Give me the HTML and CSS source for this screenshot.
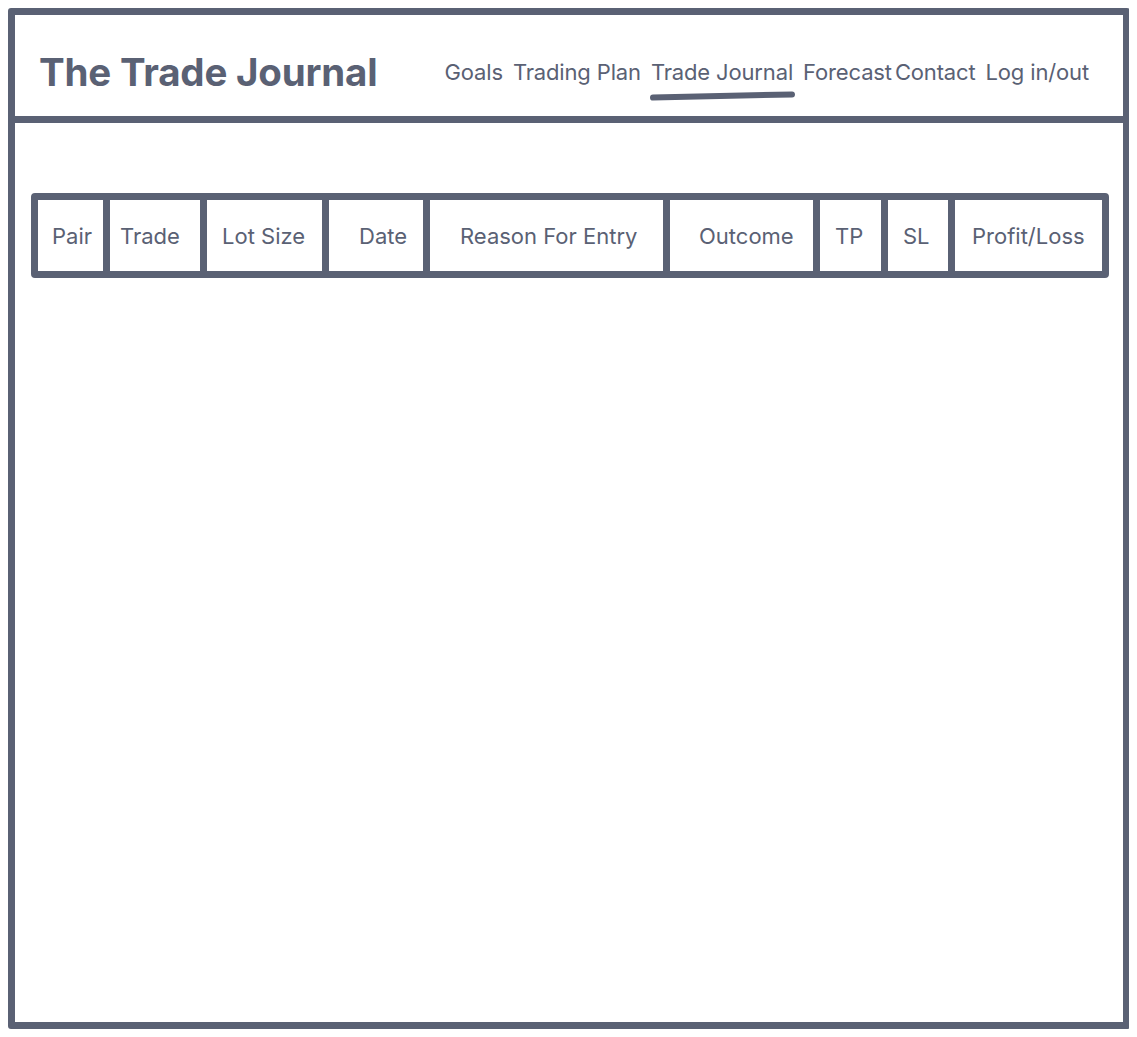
FILE: index.html
```html
<!DOCTYPE html>
<html lang="en">
<head>
<meta charset="utf-8">
<title>The Trade Journal</title>
<link rel="stylesheet" href="styles.css">
</head>
<body>
<div class="frame">
  <header class="header">
    <h1 class="title">The Trade Journal</h1>
    <nav class="nav">
      <a class="nav-link">Goals</a>
      <a class="nav-link">Trading Plan</a>
      <a class="nav-link active">Trade Journal</a>
      <a class="nav-link tight">Forecast</a>
      <a class="nav-link">Contact</a>
      <a class="nav-link">Log in/out</a>
    </nav>
  </header>
  <main class="content">
    <div class="table">
      <div class="cell c-pair">Pair</div>
      <div class="cell c-trade">Trade</div>
      <div class="cell c-lot">Lot Size</div>
      <div class="cell c-date">Date</div>
      <div class="cell c-reason">Reason For Entry</div>
      <div class="cell c-outcome">Outcome</div>
      <div class="cell c-tp">TP</div>
      <div class="cell c-sl">SL</div>
      <div class="cell c-pl">Profit/Loss</div>
    </div>
  </main>
</div>
</body>
</html>
```
FILE: styles.css
```css
* { box-sizing: border-box; }
html, body { background: #ffffff; }
body {
  margin: 8px;
  font-family: Inter, "Noto Sans", sans-serif;
  color: #5a6174;
}
.frame {
  width: 1122px;
  height: 1021px;
  border: 7px solid #5a6174;
  border-radius: 3px;
  display: flex;
  flex-direction: column;
}
.header {
  height: 108px;
  border-bottom: 7px solid #5a6174;
  display: flex;
  align-items: center;
  justify-content: space-between;
  padding: 12px 34px 0 24px;
}
.title {
  margin: 0;
  font-size: 38.5px;
  font-weight: 700;
  letter-spacing: -0.2px;
}
.nav {
  display: flex;
  align-items: center;
  gap: 10px;
  font-size: 22px;
  letter-spacing: -0.15px;
}
.nav-link {
  position: relative;
  color: #5a6174;
  text-decoration: none;
  white-space: nowrap;
}
.nav-link.tight { margin-right: -7px; }
.nav-link.active::after {
  content: "";
  position: absolute;
  left: -1px;
  right: -2px;
  top: 34px;
  height: 6px;
  border-radius: 3px;
  background: #5a6174;
  transform: rotate(-1.3deg);
}
.content {
  flex: 1;
  padding: 70px 14px 0 16px;
}
.table {
  display: grid;
  grid-template-columns: 65px 90px 115px 94px 233px 143px 61px 60px 1fr;
  column-gap: 7px;
  background: #5a6174;
  border: 7px solid #5a6174;
  border-radius: 4px;
  height: 85px;
}
.cell {
  background: #ffffff;
  display: flex;
  align-items: center;
  font-size: 22px;
}
.c-pair { padding-left: 14px; }
.c-trade { padding-left: 10px; }
.c-lot { padding-left: 15px; }
.c-date { padding-left: 30px; }
.c-reason { padding-left: 30px; }
.c-outcome { padding-left: 29px; }
.c-tp { padding-left: 15px; }
.c-sl { padding-left: 15px; }
.c-pl { padding-left: 17px; }
```
